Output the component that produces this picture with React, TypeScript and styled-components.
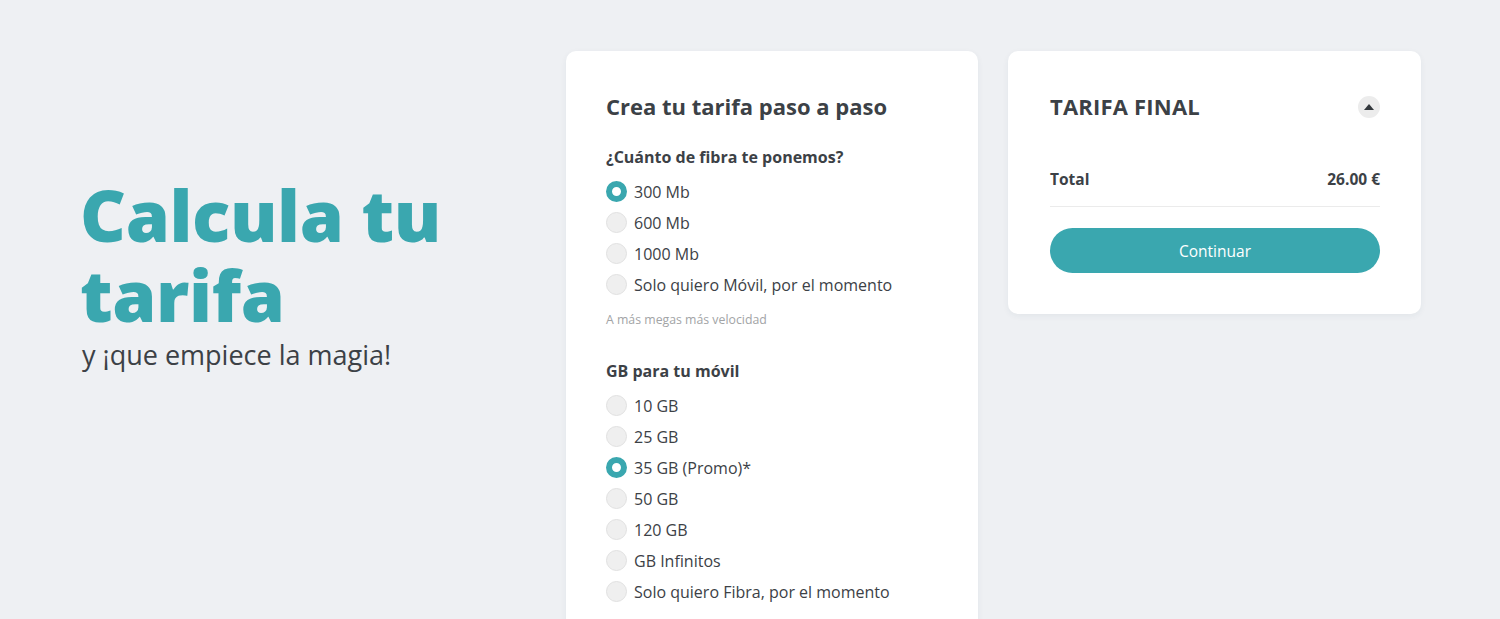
import React from "react";
import styled, { createGlobalStyle } from "styled-components";

const teal = "#3aa7af";
const ink = "#3c4146";

const Global = createGlobalStyle`
  html, body { margin: 0; padding: 0; background: #eef0f3; }
  body { font-family: "Open Sans", "Noto Sans", sans-serif; color: ${ink}; }
  * { box-sizing: border-box; }
`;

const Page = styled.div`
  display: grid;
  grid-template-columns: 1fr 412px 413px;
  column-gap: 30px;
  align-items: start;
  padding: 51px 79px 0 81px;
  height: 619px;
  overflow: hidden;
`;

const Intro = styled.div`
  padding-top: 124px;
`;

const Headline = styled.h1`
  margin: 0 0 0 -1px;
  font-size: 71px;
  line-height: 80px;
  font-weight: 800;
  color: ${teal};
  letter-spacing: -0.4px;
`;

const Tagline = styled.p`
  margin: 2px 0 0 1px;
  font-size: 27px;
  line-height: 36px;
  font-weight: 400;
  color: ${ink};
`;

const Card = styled.section<{ $tall?: boolean }>`
  background: #fff;
  border-radius: 10px;
  box-shadow: 0 2px 6px rgba(40, 60, 80, 0.06);
  padding: ${(p) => (p.$tall ? "40px" : "40px 41px 41px 42px")};
  ${(p) => (p.$tall ? "min-height: 620px;" : "")}
`;

const CardTitle = styled.h2`
  margin: 0;
  font-size: 22px;
  line-height: 30px;
  font-weight: 700;
  color: ${ink};
`;

const Question = styled.h3`
  margin: 25px 0 8px;
  font-size: 16px;
  line-height: 22px;
  font-weight: 700;
  color: ${ink};
`;

const Options = styled.div`
  display: flex;
  flex-direction: column;
`;

const Option = styled.label`
  display: flex;
  align-items: center;
  gap: 7px;
  height: 31px;
  font-size: 16px;
  color: ${ink};
  cursor: pointer;
`;

const Dot = styled.span<{ $on?: boolean }>`
  width: 21px;
  height: 21px;
  border-radius: 50%;
  flex: none;
  background: ${(p) => (p.$on ? "#fff" : "#efefef")};
  border: ${(p) => (p.$on ? `6px solid ${teal}` : "1.5px solid #e1e1e1")};
`;

const Hint = styled.p`
  margin: 12px 0 32px;
  font-size: 12.3px;
  line-height: 16px;
  color: #a2a4a6;
`;

const SummaryHead = styled.div`
  display: flex;
  align-items: center;
  justify-content: space-between;
`;

const SummaryTitle = styled.h2`
  margin: 0;
  font-size: 22px;
  line-height: 30px;
  font-weight: 700;
  letter-spacing: 0.2px;
  color: ${ink};
`;

const Toggle = styled.button`
  width: 22px;
  height: 22px;
  border-radius: 50%;
  border: none;
  background: #ececec;
  display: flex;
  align-items: center;
  justify-content: center;
  padding: 0;
  margin-top: 2px;
`;

const TotalRow = styled.div`
  display: flex;
  justify-content: space-between;
  align-items: center;
  margin-top: 47px;
  padding-bottom: 16px;
  border-bottom: 1px solid #ebebeb;
  font-size: 15.5px;
  font-weight: 700;
  color: ${ink};
`;

const Continue = styled.button`
  margin-top: 21px;
  width: 100%;
  height: 45px;
  border: none;
  border-radius: 23px;
  background: ${teal};
  color: #fff;
  font-family: inherit;
  font-size: 15.5px;
  cursor: pointer;
`;

const fibra = ["300 Mb", "600 Mb", "1000 Mb", "Solo quiero Móvil, por el momento"];
const gb = [
  "10 GB",
  "25 GB",
  "35 GB (Promo)*",
  "50 GB",
  "120 GB",
  "GB Infinitos",
  "Solo quiero Fibra, por el momento",
];

export default function App() {
  return (
    <>
      <Global />
      <Page>
        <Intro>
          <Headline>
            Calcula tu
            <br />
            tarifa
          </Headline>
          <Tagline>y ¡que empiece la magia!</Tagline>
        </Intro>
        <Card $tall>
          <CardTitle>Crea tu tarifa paso a paso</CardTitle>
          <Question>¿Cuánto de fibra te ponemos?</Question>
          <Options>
            {fibra.map((o, i) => (
              <Option key={o}>
                <Dot $on={i === 0} />
                {o}
              </Option>
            ))}
          </Options>
          <Hint>A más megas más velocidad</Hint>
          <Question>GB para tu móvil</Question>
          <Options>
            {gb.map((o, i) => (
              <Option key={o}>
                <Dot $on={i === 2} />
                {o}
              </Option>
            ))}
          </Options>
        </Card>
        <Card>
          <SummaryHead>
            <SummaryTitle>TARIFA FINAL</SummaryTitle>
            <Toggle aria-label="Plegar">
              <svg width="10" height="6" viewBox="0 0 10 6">
                <path d="M5 0 L10 6 L0 6 Z" fill="#33383c" />
              </svg>
            </Toggle>
          </SummaryHead>
          <TotalRow>
            <span>Total</span>
            <span>26.00 €</span>
          </TotalRow>
          <Continue>Continuar</Continue>
        </Card>
      </Page>
    </>
  );
}
